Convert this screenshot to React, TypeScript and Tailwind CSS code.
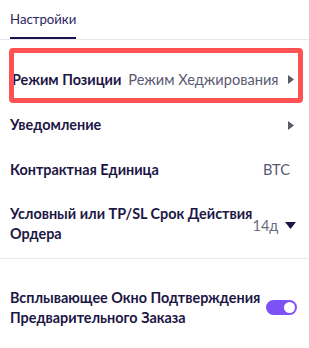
import React from 'react';

const Caret = () => (
  <svg width="6" height="9" viewBox="0 0 6 9" className="shrink-0">
    <path d="M0 0 L6 4.5 L0 9 Z" fill="#5b5b66" />
  </svg>
);

const CaretDown = () => (
  <svg width="11" height="7" viewBox="0 0 11 7" className="shrink-0">
    <path d="M0 0 L11 0 L5.5 7 Z" fill="#1c1645" />
  </svg>
);

export default function App() {
  const label = 'text-[14.4px] font-bold text-[#1c1645] leading-[20px]';

  return (
    <div
      className="w-[309px] h-[348px] bg-white overflow-hidden"
      style={{ fontFamily: 'Lato, "Noto Sans", sans-serif' }}
    >
      {/* Tabs */}
      <div className="h-[40px] border-b border-[#e8e8ec] px-[10px] flex">
        <div className="h-[39px] flex items-center border-b-2 border-[#1e1150] text-[13.2px] text-[#2a2560] pt-[2px]">
          Настройки
        </div>
      </div>

      {/* Highlighted row */}
      <div className="mt-[8px] ml-[9px] w-[294px] h-[55px] border-[5px] border-[#ff5252] rounded-[4px] overflow-hidden">
        <div className="h-full flex items-center pt-[8px] -ml-[2px] pr-[4px]">
          <span className={`${label} whitespace-nowrap`}>Режим Позиции</span>
          <span className="ml-[7px] text-[14.6px] text-[#5a5a73] whitespace-nowrap">Режим Хеджирования</span>
          <span className="ml-auto">
            <Caret />
          </span>
        </div>
      </div>

      {/* Notifications */}
      <div className="h-[44px] pl-[10px] pr-[15px] flex items-center justify-between">
        <span className={label}>Уведомление</span>
        <Caret />
      </div>

      {/* Contract unit */}
      <div className="h-[46px] pl-[10px] pr-[19px] flex items-center justify-between">
        <span className={label}>Контрактная Единица</span>
        <span className="text-[14.6px] text-[#5a5a73]">BTC</span>
      </div>

      {/* Order validity */}
      <div className="h-[66px] pl-[10px] pr-[13px] flex items-center justify-between border-b border-[#e8e8ec] pt-[2px] pb-[6px]">
        <span className={`${label} whitespace-nowrap shrink-0`}>
          Условный или TP/SL Срок Действия
          <br />
          Ордера
        </span>
        <div className="flex items-center gap-[7px] pt-[4px] ml-auto">
          <span className="text-[14.6px] text-[#6b6b80]">14д</span>
          <CaretDown />
        </div>
      </div>

      {/* Pre-order confirmation */}
      <div className="h-[98px] pl-[10px] pr-[12px] flex items-center justify-between">
        <span className={`${label} whitespace-nowrap shrink-0`}>
          Всплывающее Окно Подтверждения
          <br />
          Предварительного Заказа
        </span>
        <div className="w-[31px] h-[15px] rounded-full bg-[#7d52f4] flex items-center justify-end pr-[2px] -mt-[1px]">
          <div className="w-[11px] h-[11px] rounded-full bg-white" />
        </div>
      </div>
    </div>
  );
}
